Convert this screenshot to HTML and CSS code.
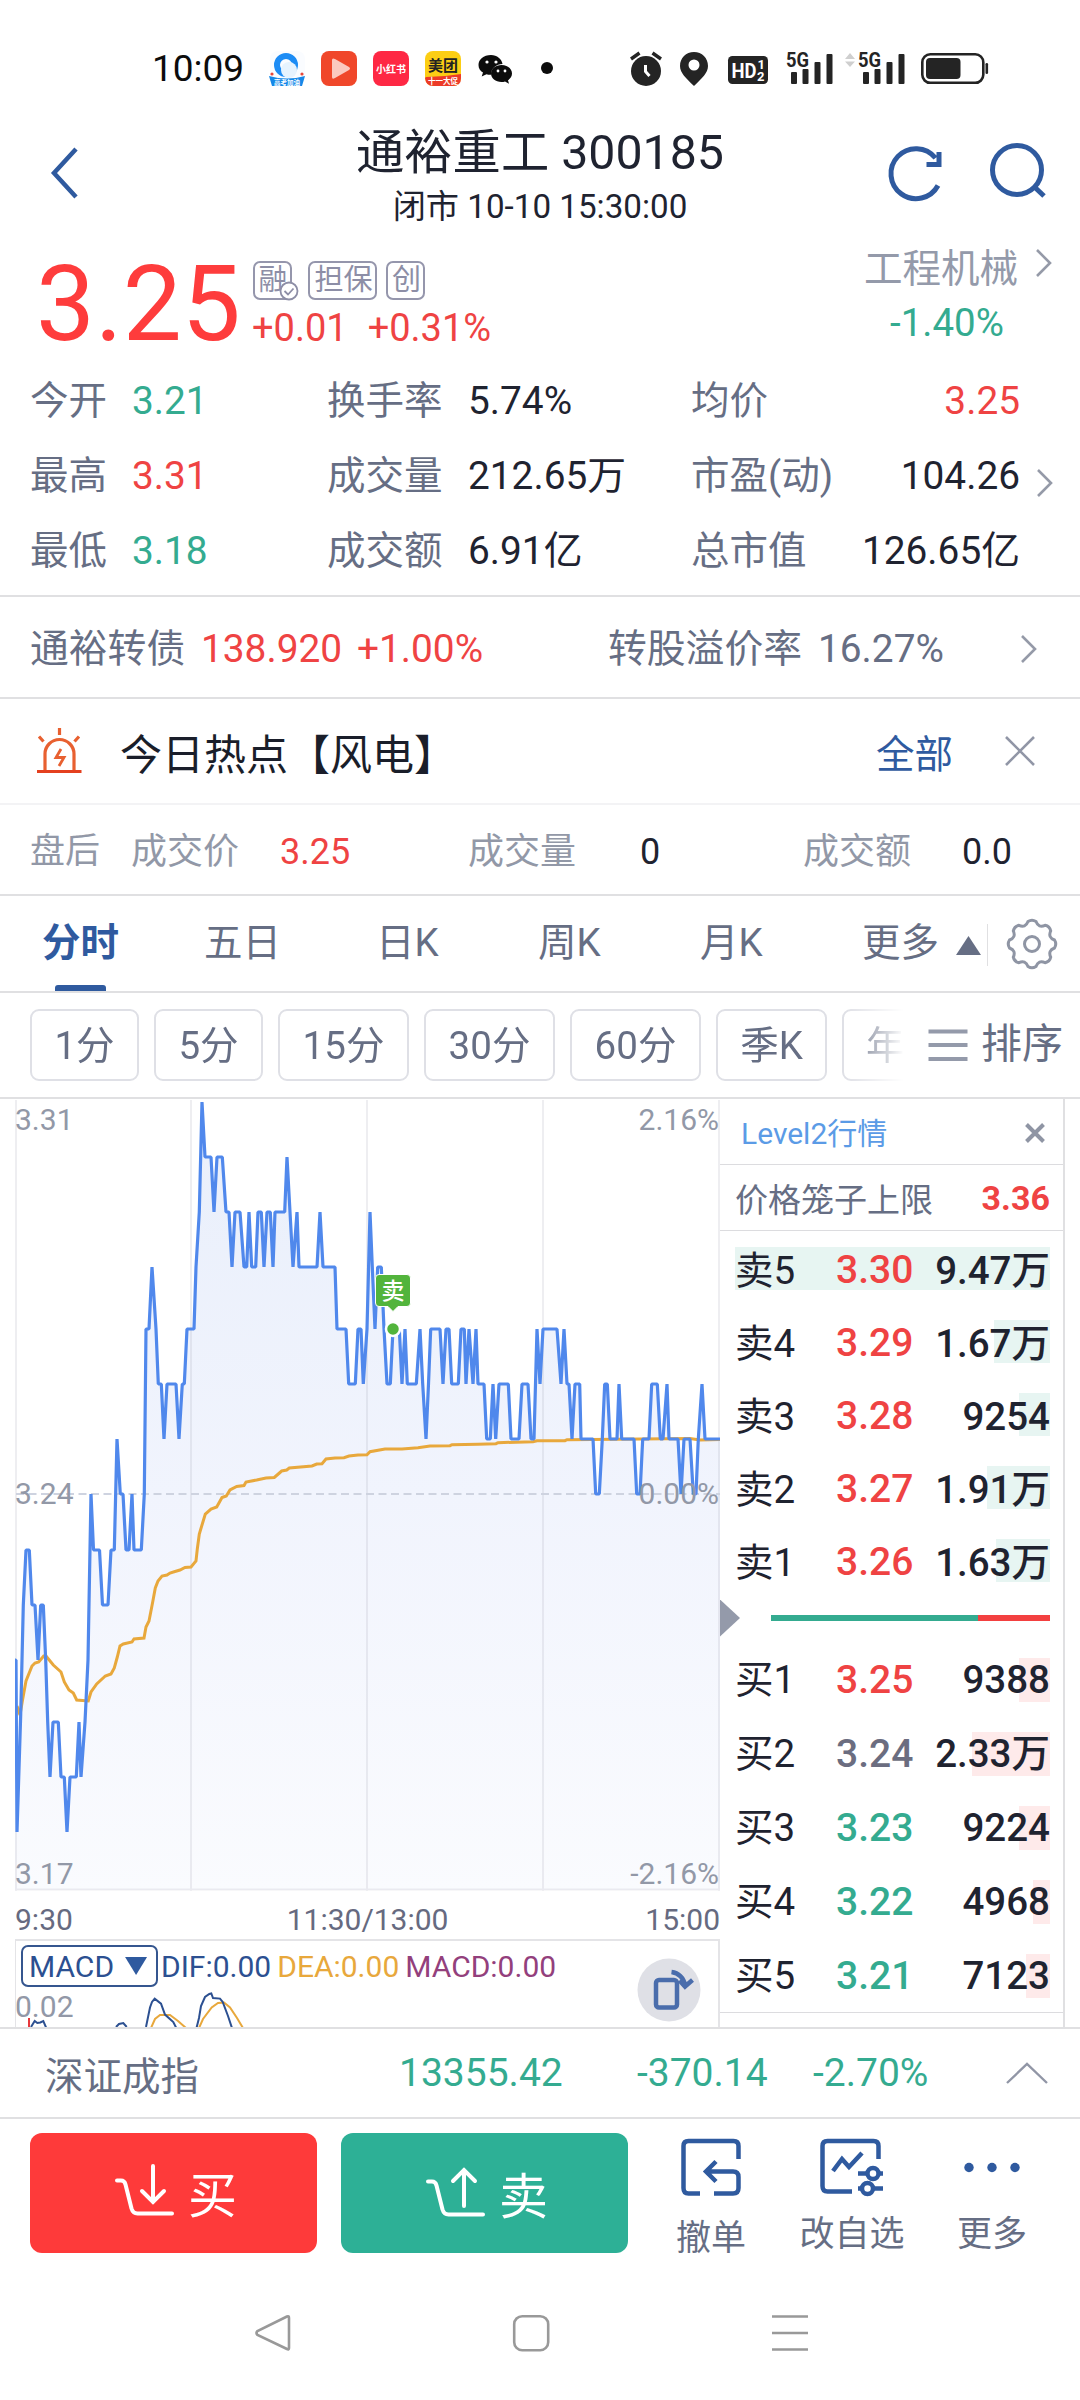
FILE: index.html
```html
<!DOCTYPE html>
<html lang="zh-CN">
<head>
<meta charset="utf-8">
<title>通裕重工 300185</title>
<link rel="stylesheet" href="styles.css">
</head>
<body>
<div class="phone">

<div class="status">
  <span class="clock">10:09</span>
  <svg class="st-apps" width="260" height="56" viewBox="260 40 260 56">
    <rect x="270" y="51" width="35" height="35" rx="8" fill="#fafcff"/>
    <circle cx="286" cy="65" r="9" fill="none" stroke="#1c8cf5" stroke-width="6"/>
    <circle cx="289" cy="70" r="8" fill="#e6f3fe"/>
    <path d="M269 76q18 5 36 0l-3 10h-30z" fill="#1688e8"/>
    <circle cx="272" cy="74" r="1.6" fill="#e8483a"/><circle cx="302" cy="74" r="1.6" fill="#e8483a"/>
    <text x="287" y="85" class="mini-w" font-size="6.5">高考加油</text>
    <rect x="321" y="51" width="36" height="35" rx="8" fill="#f0472a"/>
    <path d="M332 60v17q0 3 3 1l14-8q2-1.500 0-3l-14-8q-3-1.500-3 1z" fill="#fbc9bf"/>
    <rect x="373" y="51" width="36" height="35" rx="8" fill="#fe2844"/>
    <text x="391" y="73" class="mini-w" font-size="10">小红书</text>
    <rect x="425" y="51" width="36" height="35" rx="8" fill="#fcce14"/>
    <path d="M426 77q17 0 35-3v4q0 8-8 8h-20q-7 0-8-8z" fill="#ec3b28"/>
    <text x="443" y="71" class="mini-k" font-size="15">美团</text>
    <text x="443" y="84" class="mini-w" font-size="7.500">十一大促</text>
    <path d="M491 55c-7.500 0-12.500 4.500-12.500 10 0 3.500 1.800 6 4.500 7.600l-1.300 4 4.800-2.400q2 .6 4.500.5c0-6.500 5.500-10.700 11.500-10.700-.7-5-5.500-9-11.500-9z" fill="#0c0c0c"/>
    <path d="M501.500 65c-6 0-10.500 3.800-10.500 8.500s4.500 8.500 10.500 8.500q2 0 3.500-.6l4 2.300-1-3.500c2.500-1.700 4-4 4-6.700 0-4.700-4.500-8.500-10.500-8.500z" fill="#0c0c0c"/>
    <g fill="#fff"><circle cx="487" cy="62" r="1.600"/><circle cx="496" cy="62" r="1.600"/><circle cx="498" cy="71" r="1.400"/><circle cx="505" cy="71" r="1.400"/></g>
  </svg>
  <i class="st-dot"></i>
  <svg class="st-sys" width="380" height="56" viewBox="620 40 380 56" fill="#242424">
    <circle cx="646" cy="71" r="15"/>
    <path d="M631 59l8.500-6M661 59l-8.500-6" stroke="#242424" stroke-width="3.400" fill="none"/>
    <path d="M645.500 65v6.500l4 4.500" stroke="#fff" stroke-width="3" fill="none"/>
    <path fill-rule="evenodd" d="M694 52c-8 0-14 6-14 14 0 7 6 12 14 20 8-8 14-13 14-20 0-8-6-14-14-14zm0 7.500a5.500 5.500 0 1 1 0 11 5.500 5.500 0 0 1 0-11z"/>
    <rect x="728" y="56" width="40" height="28" rx="4.500"/>
    <text x="731.500" y="77.500" class="st-hd" font-size="21" textLength="25" lengthAdjust="spacingAndGlyphs">HD</text>
    <text x="757.500" y="69" class="st-hd" font-size="13">1</text><text x="757" y="81" class="st-hd" font-size="13">2</text>
    <g id="sig">
      <text x="786" y="67" class="st-5g" font-size="20" textLength="23" lengthAdjust="spacingAndGlyphs">5G</text>
      <rect x="791" y="72" width="6" height="12" rx="1"/><rect x="802.500" y="69" width="6" height="15" rx="1"/>
      <rect x="814.500" y="62" width="6" height="22" rx="1"/><rect x="826.500" y="54" width="6" height="30" rx="1"/>
    </g>
    <path d="M845 59l5-6 5 6zM845 61.500h10l-5 5.500z" fill="#cfcfcf"/>
    <use href="#sig" x="72"/>
    <rect x="922.300" y="54.300" width="61" height="28.500" rx="8" fill="none" stroke="#242424" stroke-width="2.600"/>
    <rect x="926" y="58" width="34.500" height="21" rx="4"/>
    <rect x="985.500" y="63" width="2.600" height="11" rx="1.300"/>
  </svg>
</div>

<header class="header">
  <svg class="back" width="30" height="54" viewBox="0 0 30 54"><path d="M26 3L4 27l22 24"/></svg>
  <div class="titles">
    <h1>通裕重工 300185</h1>
    <p>闭市 10-10 15:30:00</p>
  </div>
  <svg class="refresh" width="56" height="58" viewBox="888 145 56 58"><path d="M939 185.500a25 25 0 1 1-2.500-27.500M940 152v12.500h-12.500"/></svg>
  <svg class="search" width="58" height="58" viewBox="990 143 58 58"><circle cx="1017" cy="170" r="24.500"/><path d="M1034.500 187l9.500 9"/></svg>
</header>

<section class="price">
  <strong class="last">3.25</strong>
  <div class="chg">
    <div class="tags">
      <span class="tag t1">融<svg class="ok" width="20" height="20" viewBox="0 0 20 20"><circle cx="10" cy="10" r="8.500"/><path d="M5.500 10l3.500 3.500 5.500-6"/></svg></span>
      <span class="tag t2">担保</span><span class="tag t3">创</span>
    </div>
    <div class="delta red"><span>+0.01</span><span>+0.31%</span></div>
  </div>
  <div class="sector">
    <span class="name">工程机械</span>
    <span class="pct green">-1.40%</span>
  </div>
  <svg class="chev" width="18" height="30" viewBox="0 0 18 30"><path d="M2 2l13 13L2 28"/></svg>
</section>

<section class="quote">
  <div class="grid">
    <label>今开</label><b class="green">3.21</b><label>换手率</label><b>5.74%</b><label>均价</label><b class="r red">3.25</b>
    <label>最高</label><b class="red">3.31</b><label>成交量</label><b>212.65万</b><label>市盈(动)</label><b class="r">104.26</b>
    <label>最低</label><b class="green">3.18</b><label>成交额</label><b>6.91亿</b><label>总市值</label><b class="r">126.65亿</b>
  </div>
  <svg class="chev" width="18" height="30" viewBox="0 0 18 30"><path d="M2 2l13 13L2 28"/></svg>
</section>

<section class="bond">
  <span class="c1">通裕转债</span><span class="c2 red">138.920</span><span class="c3 red">+1.00%</span><span class="c4">转股溢价率</span><span class="c5">16.27%</span>
  <svg class="chev" width="18" height="30" viewBox="0 0 18 30"><path d="M2 2l13 13L2 28"/></svg>
</section>

<section class="hot">
  <svg class="siren" width="48" height="48" viewBox="37 726 48 48">
    <g fill="none" stroke="#e86030" stroke-width="3.200"><path d="M60.500 727v7M40 735.500l4.500 5M80 735.500l-4.500 5M46 770v-17a14 14 0 0 1 29 0v17"/><path d="M38 770.500h44.500" stroke="#e4401f"/><path d="M62 748l-5 8.500h8l-5 8.500" stroke-width="2.800"/></g>
  </svg>
  <span class="topic">今日热点【风电】</span>
  <a>全部</a>
  <svg class="x" width="32" height="32" viewBox="0 0 32 32"><path d="M2 2l28 28M30 2L2 30"/></svg>
</section>

<section class="after">
  <span>盘后</span><span>成交价</span><b class="red">3.25</b><span>成交量</span><b>0</b><span>成交额</span><b>0.0</b>
</section>

<nav class="tabs">
  <a class="on">分时</a><a>五日</a><a>日K</a><a>周K</a><a>月K</a><a>更多</a><i class="tri"></i><i class="sep"></i>
  <svg class="gear" width="52" height="52" viewBox="-26 -26 52 52"><path d="M-4-22.500Q0-25 4-22.500Q6.500-15.700 13.100-18.700Q17.700-17.700 18.700-13.100Q15.700-6.500 22.500-4Q25 0 22.500 4Q15.700 6.500 18.700 13.100Q17.700 17.700 13.100 18.700Q6.500 15.700 4 22.500Q0 25-4 22.500Q-6.500 15.700-13.100 18.700Q-17.700 17.700-18.700 13.100Q-15.700 6.500-22.500 4Q-25 0-22.500-4Q-15.700-6.500-18.700-13.100Q-17.700-17.700-13.100-18.700Q-6.500-15.700-4-22.500z"/><circle r="7.500"/></svg>
</nav>

<section class="chips">
  <div class="strip"><span class="w1">1分</span><span class="w1">5分</span><span class="w2">15分</span><span class="w2">30分</span><span class="w2">60分</span><span class="w1b">季K</span><span class="w1b part">年</span></div>
  <svg class="bars" width="42" height="32" viewBox="0 0 42 32"><path d="M1.500 2.500h39M1.500 16h39M1.500 30h39"/></svg>
  <span class="sort">排序</span>
</section>

<main class="main">
  <div class="chartcol">
    <svg class="chart" width="705" height="792" viewBox="15 1099 705 792">
      <defs>
        <linearGradient id="fill" gradientUnits="userSpaceOnUse" x1="0" y1="1100" x2="0" y2="1890"><stop offset="0" stop-color="#e9effb"/><stop offset=".5" stop-color="#f1f4fd"/><stop offset="1" stop-color="#fafbfe"/></linearGradient>
        <clipPath id="plot"><rect x="15" y="1100" width="705" height="790"/></clipPath>
        <polyline id="price" points="8,1895 8,1660 16,1660 17,1832 20.700,1715 23.300,1605 26,1550 29.300,1550 32,1605 35,1605 38,1660 40.700,1605 43.300,1605 45.700,1660 47.700,1722 50,1777 53,1722 58.300,1722 61,1777 64.300,1777 67,1832 70,1777 76.300,1777 79,1722 81,1777 85,1722 88,1660 91,1494 93.500,1550 99.500,1550 102.500,1605 108,1605 111,1550 114.300,1550 117,1439 120.300,1494 123,1494 126,1550 129,1550 132,1494 134,1550 141.300,1550 144.300,1494 146,1329 149,1329 152,1267 156,1329 158.300,1384 161.300,1384 164,1439 167,1384 176,1384 179,1439 182.300,1384 184.300,1384 187,1329 194,1329 196,1267 199.300,1212 202,1102 205,1157 211,1157 214,1212 217,1157 222.300,1157 226,1212 229,1212 232,1267 235,1212 240,1212 244,1267 246.700,1267 249,1212 251.700,1267 255.700,1267 258,1212 261.300,1212 264,1267 267,1212 270.300,1212 273,1267 275,1212 284.700,1212 287,1157 290,1212 293,1267 297,1212 299,1267 317,1267 320,1212 323,1267 335,1267 337,1329 346,1329 348.700,1384 355.300,1384 358,1329 361,1329 363.300,1384 367,1329 370,1212 372.300,1267 375,1329 377.700,1267 381.300,1267 384,1329 387,1384 390.300,1384 393,1329 399.300,1329 402,1384 405,1329 407.300,1384 416.300,1384 420,1329 422.700,1384 426,1439 428.500,1384 430.700,1329 440,1329 443,1384 446,1329 449,1329 451.700,1384 458.300,1384 461,1329 464.300,1329 466,1384 469,1329 473,1384 476,1329 478,1384 484,1384 486.700,1439 490.300,1439 493,1384 495.700,1439 499,1384 508.300,1384 511,1439 519,1439 522,1384 528,1384 531,1439 534,1439 537,1329 540,1384 543,1329 557,1329 561,1384 564,1329 567,1384 569,1384 572,1439 575,1384 579.700,1384 581,1439 593,1439 595.700,1494 599.300,1494 602.300,1439 604.700,1384 607.300,1384 610,1439 617,1439 619,1384 621.700,1439 634,1439 636.700,1494 640,1494 642.700,1439 649,1439 651.700,1384 657.300,1384 660.300,1439 663,1439 667,1384 669,1439 678,1439 681,1494 684,1439 690,1439 693.300,1494 696,1494 698.300,1439 702,1384 705,1439 728,1439 728,1895"/>
      </defs>
      <g clip-path="url(#plot)"><use href="#price" fill="url(#fill)"/></g>
      <path d="M16 1100v791M191 1100v791M367 1100v791M543 1100v791M719 1100v791M15 1889.500h705" fill="none" stroke="#999daa" stroke-opacity=".17" stroke-width="2"/>
      <path d="M16 1494H720" stroke="#ced3e0" stroke-width="2" stroke-dasharray="8 4.500"/>
      <polyline fill="none" stroke="#e8a83c" stroke-width="3" points="17,1706 20,1715 22.700,1699 26,1681 32,1666 35,1663 38.700,1662 43.700,1656 46,1656 53.300,1665 61,1672 64.300,1682 69,1690 73.300,1693 76.700,1700 88.300,1701 91,1692 96.700,1684 105.300,1676 111,1674 114.300,1668 117.300,1657 120,1646 123.300,1644 132,1642 134,1639 144,1638 146,1627 149,1621 152.700,1602 155.300,1588 158,1581 162,1576 167,1575 170,1573 175,1571.500 180,1570 185,1567.500 191,1567 196,1561 197.300,1549 199.300,1534 205.300,1514 211,1509 216.700,1507 222,1497.500 226.300,1496 230,1490 236.700,1486.500 244,1485.500 246,1482 256.700,1480 266,1478 274.300,1477.500 280,1472.500 281.700,1471 286.700,1470 289.300,1468 312,1466 316.700,1464 322,1463.700 326,1459 335,1458 344,1457.700 349,1456 358,1455 367,1454.700 370,1451.700 385,1449 402,1449 418,1447.700 430,1446 450,1445.700 452,1444.700 478,1444.300 496,1443.700 498,1442.700 533,1441.700 537,1440.700 565,1440.700 567,1439.700 690,1438.500 700,1440 720,1439.500"/>
      <g clip-path="url(#plot)"><use href="#price" fill="none" stroke="#5088ec" stroke-width="3.200" stroke-linejoin="bevel"/></g>
      <g class="axis"><text x="15" y="1130">3.31</text><text x="15" y="1503.500">3.24</text><text x="15" y="1884">3.17</text>
      <text x="719" y="1130" text-anchor="end">2.16%</text><text x="719" y="1503.500" text-anchor="end">0.00%</text><text x="719" y="1884" text-anchor="end">-2.16%</text></g>
      <path d="M379 1274.500h28q3.500 0 3.500 3.500v25q0 3.500-3.500 3.500h-9l-5 5-5-5h-9q-3.500 0-3.500-3.500v-25q0-3.500 3.500-3.500z" fill="#52b43c" stroke="#fff" stroke-width="1"/>
      <text x="393" y="1299" class="mark">卖</text>
      <circle cx="393" cy="1329" r="7" fill="#52b43c" stroke="#fff" stroke-width="2.500"/>
    </svg>
    <div class="times"><span>9:30</span><span>11:30/13:00</span><span>15:00</span></div>
    <div class="macd">
      <div class="legend"><span class="sel">MACD<i></i></span><span class="navy">DIF:0.00</span><span class="gold">DEA:0.00</span><span class="plum">MACD:0.00</span></div>
      <svg class="mini" width="705" height="36" viewBox="15 1991 705 36">
        <text class="axis" x="15" y="2017">0.02</text>
        <path d="M29 2018v9" stroke="#e8383c" stroke-width="2"/>
        <g fill="none" stroke-width="2"><path stroke="#e8a83c" d="M151 2028l4-9 5-4h10l8 6 8 7M199 2028l4-9 8.700-11.500 6.300-4.500 6-.5 6 5 7 10.500 6 10"/>
        <path stroke="#2c5091" d="M31 2027l3.700-6 2.600 2 3-.5 3-1.500 3 7M116 2027l3-3 4.300-1 3.400 4M146 2027l4-19.500 2-5.500 2.700-3.400 6.300 5 4 11 8.300 7.400 3 6M196.500 2028l2.500-10 2-12 4-9 4.300-3 2-.5 1.700 4.500 7 .6 2.700 3.400 5.300 14 4 12"/></g>
      </svg>
      <svg class="rotate" width="64" height="64" viewBox="0 0 64 64"><circle cx="32" cy="32" r="31.500" fill="#dfe0e6"/><g fill="none" stroke="#4a6dac" stroke-width="4.500"><rect x="19" y="22" width="21" height="27.500" rx="3"/><path d="M34.500 14c8 1 12 6 14 14M42.500 22.500l5.500 6 7.500-6.500"/></g></svg>
    </div>
  </div>
  <div class="book">
    <div class="lv"><a>Level2行情</a><svg width="20" height="20" viewBox="0 0 20 20"><path d="M1.500 1.500l17 17M18.500 1.500l-17 17"/></svg></div>
    <div class="cage"><span>价格笼子上限</span><b class="red">3.36</b></div>
    <div class="asks">
      <div class="row"><i style="width:315px"></i><span>卖5</span><b class="red">3.30</b><em>9.47万</em></div>
      <div class="row"><i style="width:56px"></i><span>卖4</span><b class="red">3.29</b><em>1.67万</em></div>
      <div class="row"><i style="width:31px"></i><span>卖3</span><b class="red">3.28</b><em>9254</em></div>
      <div class="row"><i style="width:63px"></i><span>卖2</span><b class="red">3.27</b><em>1.91万</em></div>
      <div class="row"><i style="width:54px"></i><span>卖1</span><b class="red">3.26</b><em>1.63万</em></div>
    </div>
    <div class="ratio"><i class="arrow"></i><i class="g" style="width:207px"></i><i class="r" style="width:72px"></i></div>
    <div class="bids">
      <div class="row"><i style="width:31px"></i><span>买1</span><b class="red">3.25</b><em>9388</em></div>
      <div class="row"><i style="width:78px"></i><span>买2</span><b class="flat">3.24</b><em>2.33万</em></div>
      <div class="row"><i style="width:31px"></i><span>买3</span><b class="green">3.23</b><em>9224</em></div>
      <div class="row"><i style="width:17px"></i><span>买4</span><b class="green">3.22</b><em>4968</em></div>
      <div class="row"><i style="width:24px"></i><span>买5</span><b class="green">3.21</b><em>7123</em></div>
    </div>
  </div>
</main>

<section class="index">
  <span class="n">深证成指</span><span class="v">13355.42</span><span class="v">-370.14</span><span class="v">-2.70%</span>
  <svg class="up" width="44" height="24" viewBox="0 0 44 24"><path d="M2 22L22 3l20 19"/></svg>
</section>

<footer class="actions">
  <button class="buy"><svg width="60" height="54" viewBox="115 2166 60 54"><path d="M117 2182.500h4q3.500 0 4.500 4l6 24q1.500 5 6 5H172M153 2168v36M142 2193l11 11 11-11"/></svg>买</button>
  <button class="sell"><svg width="60" height="54" viewBox="115 2166 60 54"><path d="M117 2182.500h4q3.500 0 4.500 4l6 24q1.500 5 6 5H172M153 2207v-36M142 2182l11-11 11 11"/></svg>卖</button>
  <div class="act a1"><svg width="64" height="62" viewBox="680 2138 64 62"><path d="M739.500 2160v-13q0-5-5-5h-45q-5 0-5 5v42q0 5.500 5 5.500H701M717 2162.500l-10 10 10 10M708 2172.500h26q5.500 0 5.500 5.500v11q0 5.500-5.500 5.500H715"/></svg><span>撤单</span></div>
  <div class="act a2"><svg width="68" height="62" viewBox="819 2138 68 62"><path d="M879.500 2160v-13q0-5-5-5h-46q-5 0-5 5v40q0 5.500 5 5.500H853M834 2172l9-12 7 8 13-14"/><path d="M859 2174.500h8M880 2174.500h4M859 2189.500h4M874 2189.500h10"/><circle cx="874" cy="2174.500" r="5.500"/><circle cx="868.500" cy="2189.500" r="5.500"/></svg><span>改自选</span></div>
  <div class="act a3"><svg width="64" height="62" viewBox="961 2138 64 62"><g fill="#2f5a9f" stroke="none"><circle cx="970" cy="2168.500" r="4.700"/><circle cx="993" cy="2168.500" r="4.700"/><circle cx="1016" cy="2168.500" r="4.700"/></g></svg><span>更多</span></div>
</footer>

<div class="sysnav">
  <svg width="38" height="40" viewBox="253 2314 38 40"><path d="M289 2319v30q0 2-2 1L257.500 2336q-2-2 0-4L287 2317.500q2-1 2 1.500z"/></svg>
  <svg width="38" height="40" viewBox="512 2314 38 40"><rect x="514.200" y="2317.200" width="34" height="34" rx="8"/></svg>
  <svg width="38" height="40" viewBox="770 2314 38 40"><path d="M771 2317.500h36M771 2334h36M771 2350.500h36"/></svg>
</div>
</div>
</body>
</html>
```

FILE: styles.css
```css
* { box-sizing: border-box; }
body { margin: 0; background: #fff; }
svg { display: block; flex: none; overflow: visible; }
h1, p { margin: 0; font-weight: 400; }
b, em, i { font-style: normal; font-weight: 400; }
.phone { width: 1080px; height: 2400px; overflow: hidden; background: #fff; color: #1f2330; font-family: Roboto, "Noto Sans CJK SC", sans-serif; font-size: 38.5px; white-space: nowrap; font-weight: 400; }
.red { color: #ef4343; }
.green { color: #34ab90; }
.flat { color: #6b6d80; }

/* status bar */
.status { display: flex; height: 120px; padding: 40px 0 0 152px; }
.clock { width: 108px; font-size: 37px; line-height: 58px; color: #0c0c0c; }
.st-dot { width: 12px; height: 12px; margin: 22px 67px 0 21px; border-radius: 50%; background: #0c0c0c; }
.mini-w { fill: #fff; font-weight: 700; text-anchor: middle; }
.mini-k { fill: #222; font-weight: 700; text-anchor: middle; }
.st-hd { fill: #fff; font-weight: 700; }
.st-5g { font-weight: 700; }

/* title */
.header { display: flex; height: 128px; }
.header svg { fill: none; stroke: #2f5a9f; stroke-width: 5; }
.header .back { margin: 26px 0 0 50px; stroke-width: 4.5; }
.titles { flex: 0 0 922px; margin-left: -1px; text-align: center; }
.titles h1 { font-size: 48.3px; line-height: 66px; }
.titles p { font-size: 33.2px; line-height: 42px; }
.refresh { margin: 25px 0 0 -114px; }
.search { margin: 23px 0 0 47px; }

/* last price */
.price { display: flex; height: 114px; padding-left: 36px; }
.last { width: 216px; font-size: 105px; line-height: 114px; font-weight: 400; color: #fe3c3c; }
.tags { display: flex; margin: 13px 0 0 1px; }
.tag { position: relative; height: 39px; border: 2px solid #9596ac; border-radius: 7px; font-size: 29px; line-height: 35px; color: #8d8ea6; text-align: center; }
.t1 { width: 39px; margin-right: 16px; padding-left: 1px; }
.t2 { width: 69px; margin-right: 9px; padding-left: 2px; }
.t3 { width: 39px; padding-left: 2px; }
.ok { position: absolute; right: -9px; bottom: -3px; fill: #fff; stroke: #8d8ea6; stroke-width: 1.8; }
.delta { display: flex; gap: 20px; line-height: 50px; margin-top: 3px; font-size: 38px; }
.sector { display: flex; flex-direction: column; width: 160px; margin-left: auto; align-items: center; color: #949aaa; }
.sector .name { line-height: 41px; }
.sector .pct { line-height: 68px; margin-left: 12px; }
.chev { fill: none; stroke: #959aa8; stroke-width: 2.6; }
.price .chev { margin: 0 27px 0 14px; }

/* quote grid */
.quote { display: flex; align-items: center; height: 235px; padding: 0 0 7px 30px; border-bottom: 2px solid #e0e0e2; }
.grid { display: grid; grid-template-columns: 103px 194px 142px 222px 130px 199px; grid-auto-rows: 75px; line-height: 75px; }
.grid label, .bond { color: #666e84; }
.grid .r { text-align: right; }
.grid b { margin-left: -1px; font-size: 38.8px; }
.quote .chev { margin: 15px 0 0 16px; }

/* convertible bond */
.bond { display: flex; align-items: center; height: 102px; padding: 3px 0 0 30px; border-bottom: 2px solid #e0e0e2; font-size: 38.8px; }
.c1 { width: 171px; }
.c2 { width: 156px; }
.c3 { width: 251px; }
.c4 { width: 210px; }
.c5 { width: 202px; }
.bond span { line-height: 98px; }

/* hot topic */
.hot { display: flex; align-items: center; height: 106px; padding-left: 37px; border-bottom: 2px solid #f3f3f5; }
.siren { margin-left: -1px; }
.topic { width: 756px; margin-left: 36px; font-size: 42px; color: #1a1e2a; }
.hot a { width: 128px; color: #2f5a9f; }
.hot .x { fill: none; stroke: #9196a6; stroke-width: 2.6; }

/* after-hours trading */
.after { display: grid; grid-template-columns: 101px 149px 188px 172px 163px 159px auto; height: 91px; padding-left: 30px; font-size: 36px; line-height: 94px; color: #9298a7; border-bottom: 2px solid #e0e0e2; }
.after b { color: #1f2330; }
.after b.red { color: #ef4343; }
.after span:first-child { font-size: 35px; }

/* period tabs */
.tabs { display: flex; height: 97px; padding-left: 42px; line-height: 93px; color: #666e84; border-bottom: 2px solid #e0e0e2; }
.tabs a { width: 162px; }
.tabs .on { position: relative; font-weight: 700; color: #2f5a9f; }
.tabs .on::after { content: ""; position: absolute; left: 13px; bottom: 0; width: 51px; height: 6px; border-radius: 3px 3px 0 0; background: #2f5a9f; }
.tabs a:nth-child(2) { width: 172px; }
.tabs a:nth-child(6) { width: 94px; }
.tri { margin-top: 40px; width: 25px; height: 19px; background: #666e84; clip-path: polygon(50% 0, 100% 100%, 0 100%); }
.sep { width: 1px; height: 42px; margin: 28px 0 0 6px; background: #e0e0e2; }
.gear { margin: 22px 0 0 18px; fill: none; stroke: #8f95a4; stroke-width: 3; }

/* interval chips */
.chips { display: flex; align-items: center; height: 106px; padding-left: 30px; border-bottom: 2px solid #e0e0e2; color: #666e84; }
.strip { display: flex; width: 875px; gap: 15px; overflow: hidden; -webkit-mask-image: linear-gradient(90deg, #000 815px, transparent 874px); mask-image: linear-gradient(90deg, #000 815px, transparent 874px); }
.strip span { flex: none; height: 72px; line-height: 69px; border: 2px solid #dfe0e6; border-radius: 9px; text-align: center; }
.strip .w1 { width: 109px; }
.strip .w2 { width: 131px; }
.strip .w1b { width: 111px; }
.strip .part { text-align: left; padding-left: 22px; }
.bars { margin-left: 22px; stroke: #949aaa; stroke-width: 4; }
.sort { margin-left: 12px; font-size: 41px; line-height: 60px; padding-bottom: 2px; }

/* chart */
.main { display: flex; height: 930px; padding-left: 15px; border-bottom: 2px solid #e0e0e2; overflow: hidden; }
.chartcol { width: 705px; }
.axis { font-size: 30px; fill: #9298a7; }
.mark { font-size: 23px; fill: #fff; text-anchor: middle; font-weight: 500; }
.times { display: flex; justify-content: space-between; height: 48px; font-size: 30px; line-height: 58px; color: #666a80; }
.times span:nth-child(2) { margin-left: 17px; }
.macd { position: relative; height: 91px; border: solid #e4e4e7; border-width: 2px 2px 0 1px; }
.legend { display: flex; padding: 4px 0 0 5px; font-size: 30px; line-height: 44px; }
.sel { display: flex; width: 137px; height: 42px; padding-left: 6px; line-height: 40px; border: 2px solid #35568f; border-radius: 7px; color: #2c5091; }
.sel i { width: 22px; height: 18px; margin: 10px 0 0 11px; background: #2f5a9f; clip-path: polygon(0 0, 100% 0, 50% 100%); }
.navy { color: #2c5091; margin-left: 3px; }
.gold { color: #e8a83c; margin-left: 6px; }
.plum { color: #93407c; margin-left: 6px; }
.mini { margin: 2px 0 0 -1px; }
.rotate { position: absolute; left: 621px; top: 17px; }

/* order book */
.book { width: 345px; border-right: 2px solid #e0e0e2; }
.lv, .cage { display: flex; justify-content: space-between; align-items: center; height: 66px; border-bottom: 1px solid #dcdcdf; padding: 0 18px 2px 21px; font-size: 30px; color: #5b9be6; }
.lv svg { stroke: #8f95a4; stroke-width: 4; margin-top: 4px; }
.cage { padding: 0 13px 0 15px; font-size: 33px; color: #666e84; }
.cage b { font-size: 34px; font-weight: 700; }
.asks { padding-top: 3px; }
.row { position: relative; display: flex; height: 73px; padding-left: 15px; line-height: 73px; }
.row i { position: absolute; right: 13px; top: 13px; height: 43px; background: #e7f5f2; }
.bids .row i { background: #feeaea; height: 44px; top: 15px; }
.row span, .row b, .row em { position: relative; }
.row span { width: 101px; }
.row b { width: 80px; font-weight: 500; font-size: 39px; }
.row em { width: 134px; text-align: right; font-weight: 500; }
.ratio { display: flex; align-items: center; height: 44px; padding-bottom: 6px; }
.ratio .arrow { width: 20px; height: 37px; margin-right: 31px; background: #949aaa; clip-path: polygon(0 0, 100% 50%, 0 100%); }
.ratio .g { height: 6px; background: #34ab90; }
.ratio .r { height: 6px; background: #f34040; }
.bids { height: 370px; border-bottom: 1px solid #dcdcdf; }
.bids .row { height: 74px; line-height: 74px; }

/* market index */
.index { display: flex; align-items: center; height: 90px; padding-left: 45px; border-bottom: 2px solid #e0e0e2; }
.index .n { width: 354px; color: #666e84; }
.index .v { color: #34ab90; font-size: 39px; }
.index .v:nth-child(2) { width: 238px; }
.index .v:nth-child(3) { width: 176px; }
.index .v:nth-child(4) { width: 192px; }
.up { fill: none; stroke: #9196a6; stroke-width: 2.4; }

/* trade actions */
.actions { display: flex; height: 151px; padding: 14px 0 0 30px; }
button { display: flex; align-items: center; justify-content: center; gap: 13px; width: 287px; height: 120px; padding: 0 0 4px 5px; border: 0; border-radius: 12px; color: #fff; font: 400 49px "Noto Sans CJK SC", sans-serif; }
button svg { fill: none; stroke: #fff; stroke-width: 4; stroke-linecap: round; }
.buy { background: #fe3a3a; margin-right: 24px; }
.sell { background: #2db096; padding-bottom: 2px; }
.act { display: flex; flex-direction: column; align-items: center; width: 140px; padding-top: 4px; font-size: 35px; color: #666e84; }
.act svg { fill: none; stroke: #2f5a9f; stroke-width: 4.5; }
.act span { line-height: 50px; margin-top: 11px; }
.a1 { margin-left: 13px; }
.a1 span { margin-top: 15px; }
.a2 { margin-left: 1px; }

/* system navigation */
.sysnav { display: flex; gap: 221px; padding: 43px 0 0 253px; }
.sysnav svg { fill: none; stroke: #999; stroke-width: 2.6; }
```
